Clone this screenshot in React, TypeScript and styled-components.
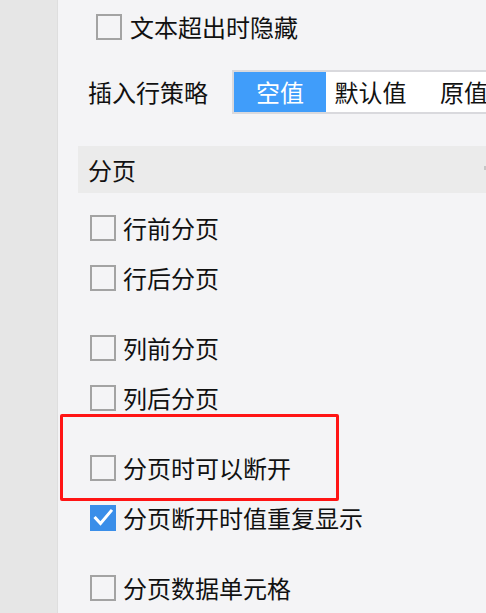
import React from "react";
import styled, { createGlobalStyle } from "styled-components";

const GlobalStyle = createGlobalStyle`
  html, body {
    margin: 0;
    padding: 0;
    background: #f4f4f6;
  }
  body {
    font-family: "Noto Sans CJK SC", "Noto Sans", sans-serif;
    color: #111;
  }
`;

type Option = { label: string; checked?: boolean };

const groups: Option[][] = [
  [{ label: "行前分页" }, { label: "行后分页" }],
  [{ label: "列前分页" }, { label: "列后分页" }],
  [{ label: "分页时可以断开" }, { label: "分页断开时值重复显示", checked: true }],
  [{ label: "分页数据单元格" }],
];

const segments = [
  { label: "空值", width: 92, active: true },
  { label: "默认值", width: 89 },
  { label: "原值", width: 98 },
];

const CheckBox = ({ checked }: { checked?: boolean }) => (
  <Box $checked={checked}>
    {checked && (
      <svg width="26" height="26" viewBox="0 0 26 26">
        <polyline
          points="5.5,13 10.5,18.5 21,6"
          fill="none"
          stroke="#fff"
          strokeWidth="3"
          strokeLinecap="square"
        />
      </svg>
    )}
  </Box>
);

const App = () => {
  return (
    <Page>
      <GlobalStyle />
      <Sidebar />
      <Panel>
        <TopRow>
          <CheckBox />
          <Label>文本超出时隐藏</Label>
        </TopRow>

        <StrategyRow>
          <FieldLabel>插入行策略</FieldLabel>
          <Segmented>
            {segments.map((s) => (
              <Segment key={s.label} $active={s.active} $width={s.width}>
                {s.label}
              </Segment>
            ))}
          </Segmented>
        </StrategyRow>

        <SectionHeader>
          <span>分页</span>
          <Chevron />
        </SectionHeader>

        <Groups>
          {groups.map((group, i) => (
            <Group key={i}>
              {group.map((opt) => (
                <Row key={opt.label}>
                  <CheckBox checked={opt.checked} />
                  <RowLabel>{opt.label}</RowLabel>
                </Row>
              ))}
            </Group>
          ))}
        </Groups>
      </Panel>
      <Highlight />
    </Page>
  );
};

export default App;

const Page = styled.div`
  position: relative;
  display: flex;
  width: 486px;
  height: 613px;
  overflow: hidden;
`;

const Sidebar = styled.div`
  width: 57px;
  flex-shrink: 0;
  background: #e6e6e6;
  border-right: 1px solid #dedede;
`;

const Panel = styled.div`
  flex: 1;
  min-width: 0;
  background: #f4f4f6;
  display: flex;
  flex-direction: column;
  overflow: hidden;
`;

const TopRow = styled.div`
  height: 56px;
  display: flex;
  align-items: center;
  padding-left: 38px;
  gap: 8px;
`;

const Label = styled.span`
  font-size: 24px;
  line-height: 1;
  white-space: nowrap;
`;

const StrategyRow = styled.div`
  margin-top: 15px;
  height: 44px;
  display: flex;
  align-items: center;
  padding-left: 30px;
`;

const FieldLabel = styled.span`
  font-size: 24px;
  line-height: 1;
  width: 144px;
  flex-shrink: 0;
  white-space: nowrap;
`;

const Segmented = styled.div`
  display: flex;
  flex-shrink: 0;
  height: 44px;
  box-sizing: border-box;
  border: 2px solid #d9d9dd;
  background: #fff;
`;

const Segment = styled.div<{ $active?: boolean; $width: number }>`
  width: ${(p) => p.$width}px;
  display: flex;
  align-items: center;
  justify-content: center;
  font-size: 24px;
  white-space: nowrap;
  background: ${(p) => (p.$active ? "#409dfa" : "#fff")};
  color: ${(p) => (p.$active ? "#fff" : "#111")};
`;

const SectionHeader = styled.div`
  margin-top: 32px;
  margin-left: 20px;
  height: 48px;
  display: flex;
  align-items: center;
  justify-content: space-between;
  padding-left: 10px;
  background: #ebebeb;
  font-size: 24px;
`;

const Chevron = styled.span`
  width: 2px;
  height: 4px;
  margin-bottom: 2px;
  background: #c6c6c6;
`;

const Groups = styled.div`
  margin-top: 10px;
  display: flex;
  flex-direction: column;
  gap: 20px;
`;

const Group = styled.div`
  display: flex;
  flex-direction: column;
`;

const Row = styled.div`
  height: 50px;
  display: flex;
  align-items: center;
  padding-left: 32px;
  gap: 7px;
`;

const RowLabel = styled.span`
  font-size: 24px;
  line-height: 1;
  white-space: nowrap;
`;

const Box = styled.span<{ $checked?: boolean }>`
  width: 26px;
  height: 26px;
  flex-shrink: 0;
  box-sizing: border-box;
  border: ${(p) => (p.$checked ? "none" : "2px solid #a3a3a3")};
  background: ${(p) => (p.$checked ? "#3a8ee9" : "transparent")};
  display: flex;
`;

const Highlight = styled.div`
  position: absolute;
  left: 60px;
  top: 414px;
  width: 279px;
  height: 87px;
  box-sizing: border-box;
  border: 3px solid #ff1414;
  border-radius: 2px;
  pointer-events: none;
`;
